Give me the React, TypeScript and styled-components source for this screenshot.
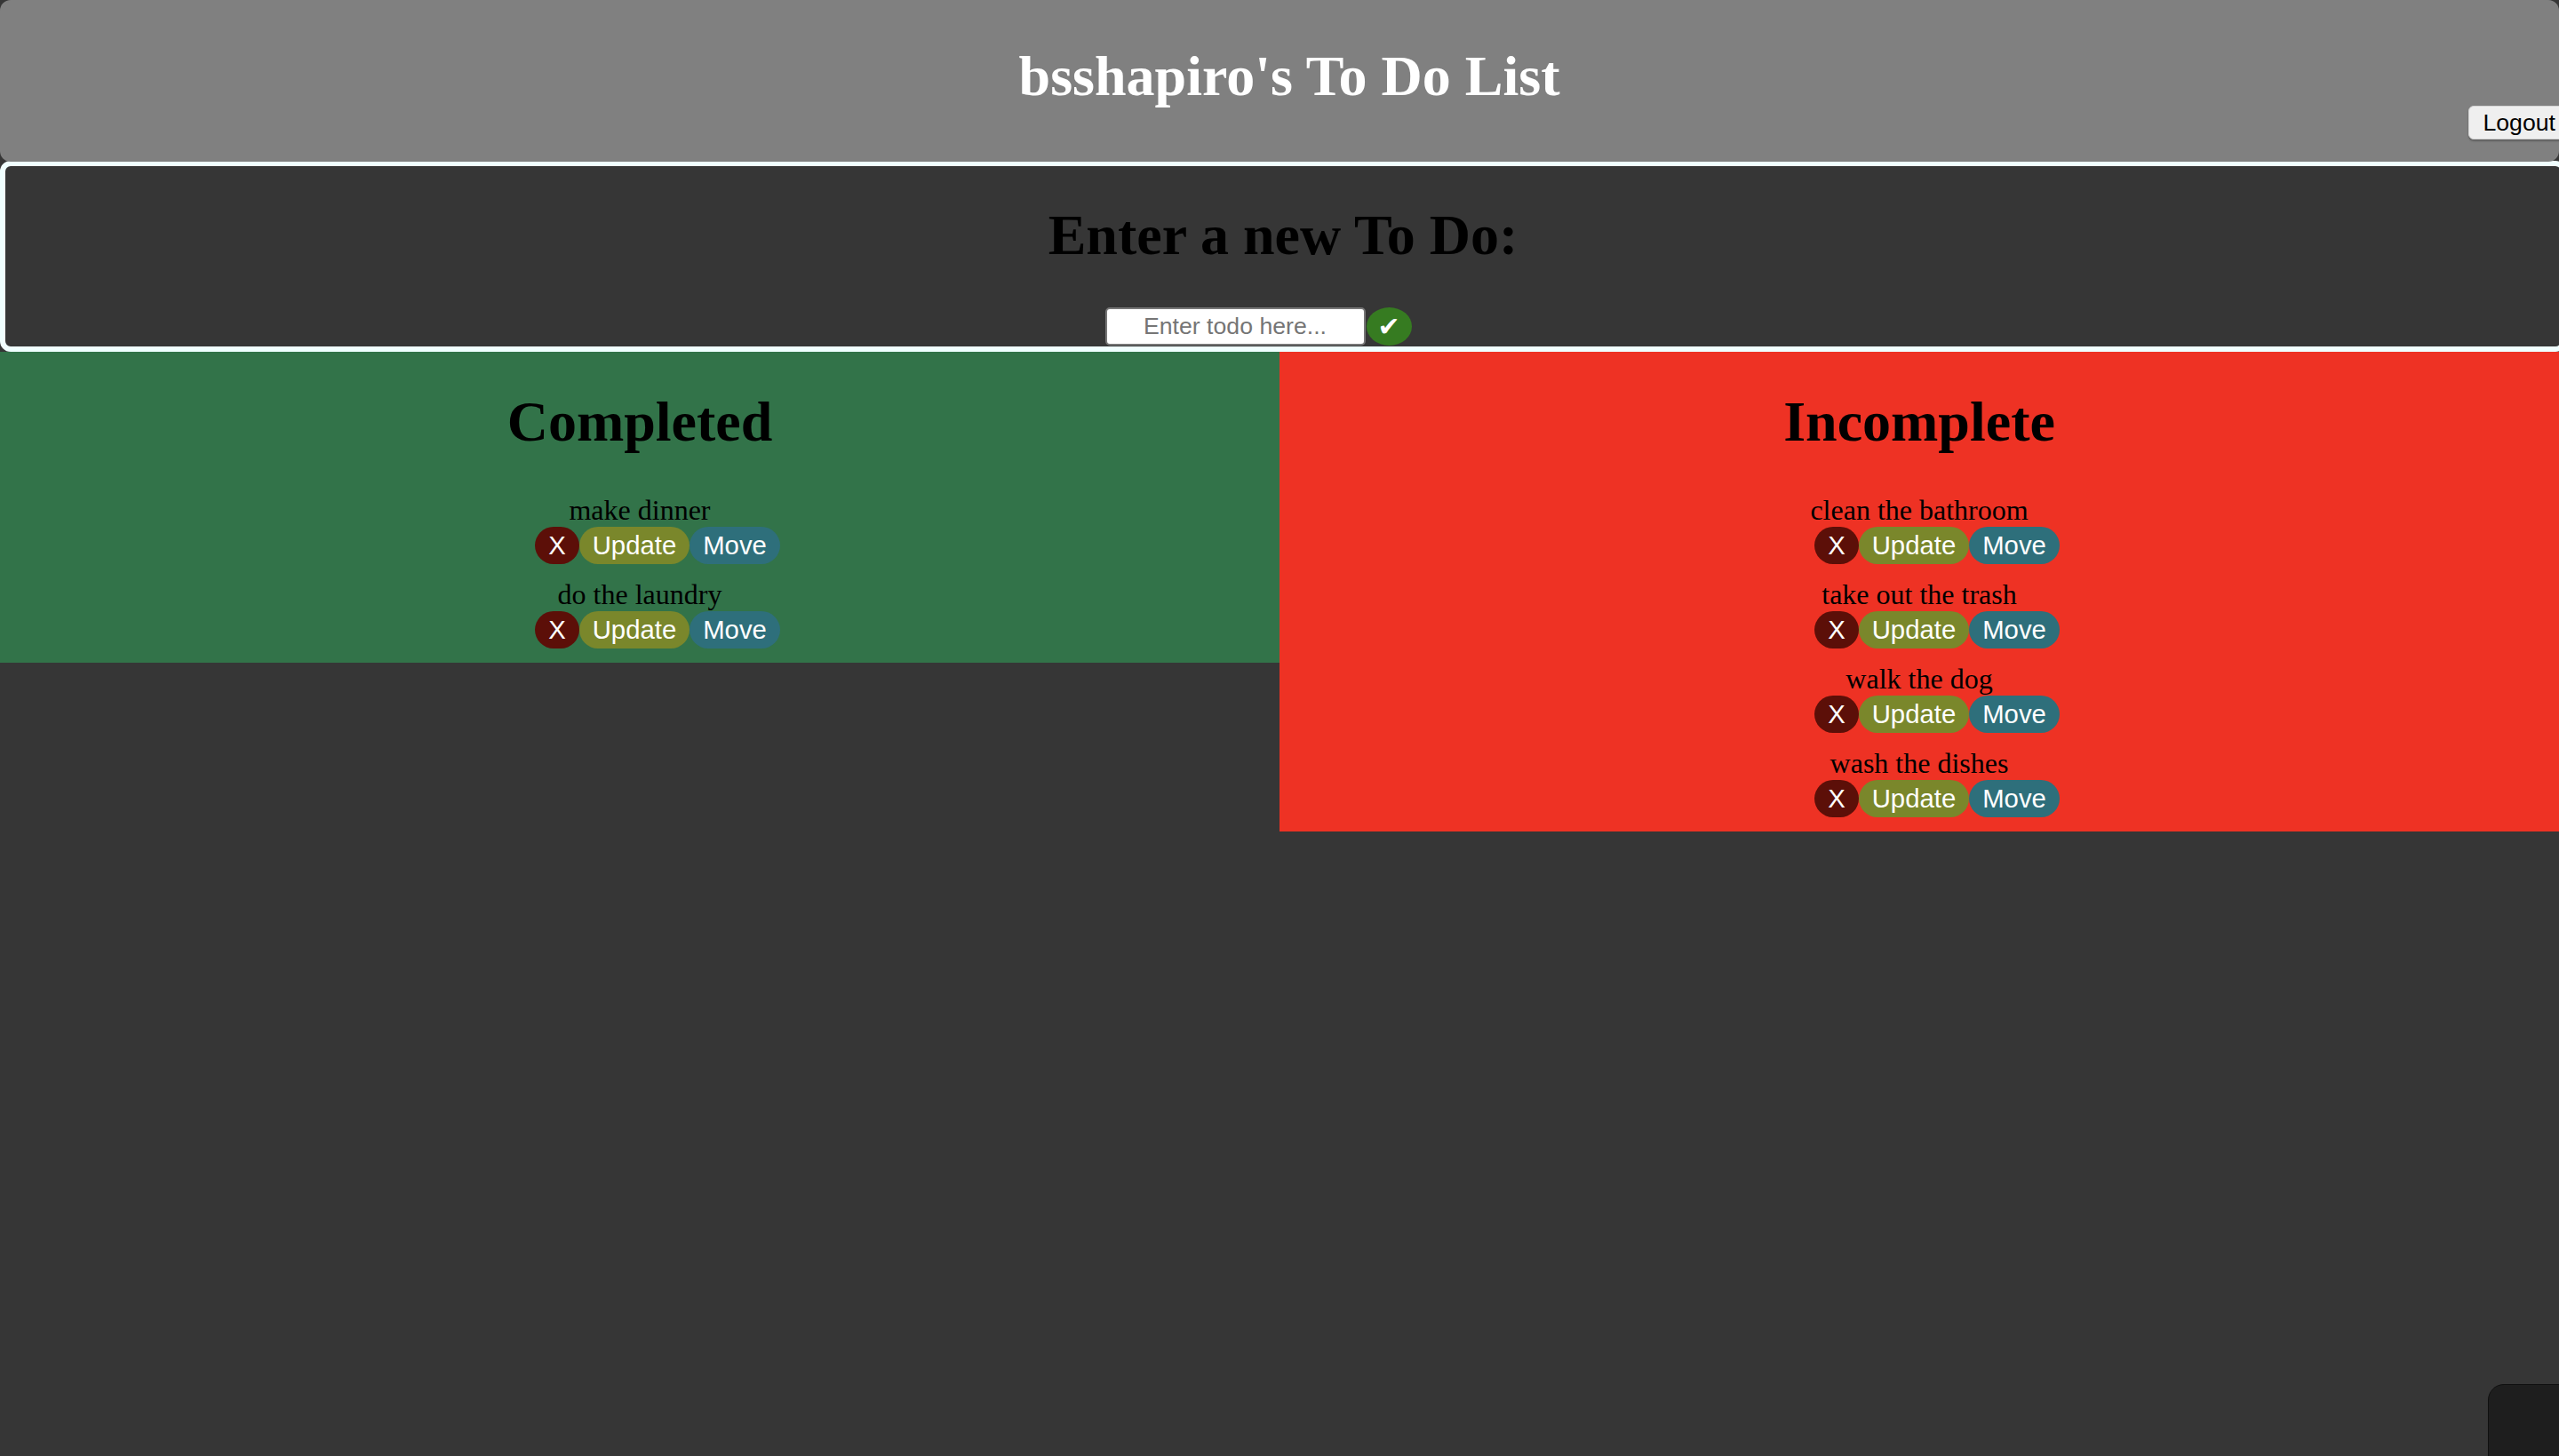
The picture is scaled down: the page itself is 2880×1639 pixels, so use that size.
import React, { useState } from 'react';
import styled, { createGlobalStyle } from 'styled-components';

const GlobalStyle = createGlobalStyle`
  html, body {
    margin: 0;
    padding: 0;
    background: #363636;
    overflow-x: hidden;
  }
  body {
    font-family: "Liberation Serif", "Times New Roman", serif;
  }
`;

const Page = styled.div`
  min-height: 1639px;
  background: #363636;
`;

const Header = styled.header`
  position: relative;
  box-sizing: border-box;
  height: 182px;
  padding-top: 49px;
  background: #808080;
  border-radius: 12px;
`;

const Title = styled.h1`
  margin: 0;
  padding-left: 22px;
  text-align: center;
  font-size: 64px;
  font-weight: bold;
  line-height: normal;
  color: #ffffff;
`;

const LogoutButton = styled.button`
  position: absolute;
  top: 119px;
  right: -12px;
  height: 38px;
  padding: 0 15px;
  border: 1px solid #d4d4d4;
  border-radius: 6px;
  background: #efefef;
  box-shadow: 0 2px 2px rgba(0, 0, 0, 0.25);
  color: #000;
  font-family: "Liberation Sans", Arial, sans-serif;
  font-size: 26.67px;
`;

const NewTodoBox = styled.section`
  box-sizing: border-box;
  width: calc(100% + 8px);
  margin-top: -1px;
  padding-bottom: 1px;
  border: 6px solid #f0ffff;
  border-radius: 12px;
  background: #363636;
  text-align: center;
`;

const SectionTitle = styled.h1`
  margin: 41px 0 44px;
  font-size: 64px;
  font-weight: bold;
  line-height: normal;
  color: #000;
`;

const InputRow = styled.div`
  display: flex;
  justify-content: center;
  padding-right: 56px;
`;

const TodoInput = styled.input`
  box-sizing: border-box;
  width: 293px;
  height: 43px;
  border: 2px solid #767676;
  border-radius: 5px;
  background: #fff;
  text-align: center;
  font-family: "Liberation Sans", Arial, sans-serif;
  font-size: 26.67px;
  outline: none;

  &::placeholder {
    color: #757575;
  }
`;

const SubmitButton = styled.button`
  display: flex;
  align-items: center;
  justify-content: center;
  width: 51px;
  height: 43px;
  margin-left: 1px;
  padding: 0;
  border: none;
  border-radius: 50%;
  background: #367b21;
  color: #fff;
  font-family: "DejaVu Sans", sans-serif;
  font-size: 30px;
  line-height: 1;
`;

const Columns = styled.div`
  display: grid;
  grid-template-columns: 1fr 1fr;
  align-items: start;
`;

const Column = styled.section<{ $bg: string }>`
  display: flow-root;
  background: ${p => p.$bg};
  text-align: center;
`;

const ColumnTitle = styled.h2`
  margin: 42px 0 44px;
  font-size: 64px;
  font-weight: bold;
  line-height: normal;
  color: #000;
`;

const Item = styled.div`
  margin-bottom: 16px;
`;

const ItemText = styled.div`
  font-size: 32px;
  line-height: normal;
  color: #000;
`;

const ButtonRow = styled.div`
  display: flex;
  justify-content: center;
  padding-left: 40px;
`;

const PillButton = styled.button<{ $bg: string }>`
  height: 42px;
  padding: 0 15px;
  border: none;
  border-radius: 21px;
  background: ${p => p.$bg};
  color: #fff;
  font-family: "Liberation Sans", Arial, sans-serif;
  font-size: 29.3px;
  line-height: 42px;
  cursor: pointer;
`;

const CornerWidget = styled.div`
  position: fixed;
  left: 2800px;
  top: 1558px;
  width: 200px;
  height: 200px;
  border: 1px solid #101010;
  border-radius: 18px;
  background: #1e1e1e;
`;

interface Todo {
  id: number;
  text: string;
  done: boolean;
}

const initialTodos: Todo[] = [
  { id: 1, text: 'make dinner', done: true },
  { id: 2, text: 'do the laundry', done: true },
  { id: 3, text: 'clean the bathroom', done: false },
  { id: 4, text: 'take out the trash', done: false },
  { id: 5, text: 'walk the dog', done: false },
  { id: 6, text: 'wash the dishes', done: false },
];

const TodoItem: React.FC<{ todo: Todo; onRemove: () => void; onMove: () => void }> = ({
  todo,
  onRemove,
  onMove,
}) => (
  <Item>
    <ItemText>{todo.text}</ItemText>
    <ButtonRow>
      <PillButton $bg="#5c0f08" onClick={onRemove}>X</PillButton>
      <PillButton $bg="#7a872b">Update</PillButton>
      <PillButton $bg="#2e6f7b" onClick={onMove}>Move</PillButton>
    </ButtonRow>
  </Item>
);

const App: React.FC = () => {
  const [todos, setTodos] = useState<Todo[]>(initialTodos);
  const [draft, setDraft] = useState('');

  const handleAdd = () => {
    if (!draft.trim()) return;
    setTodos([...todos, { id: Date.now(), text: draft.trim(), done: false }]);
    setDraft('');
  };

  const handleRemove = (id: number) => setTodos(todos.filter(t => t.id !== id));
  const handleMove = (id: number) =>
    setTodos(todos.map(t => (t.id === id ? { ...t, done: !t.done } : t)));

  const renderList = (done: boolean) =>
    todos
      .filter(t => t.done === done)
      .map(t => (
        <TodoItem
          key={t.id}
          todo={t}
          onRemove={() => handleRemove(t.id)}
          onMove={() => handleMove(t.id)}
        />
      ));

  return (
    <>
      <GlobalStyle />
      <Page>
        <Header>
          <Title>bsshapiro's To Do List</Title>
          <LogoutButton>Logout</LogoutButton>
        </Header>

        <NewTodoBox>
          <SectionTitle>Enter a new To Do:</SectionTitle>
          <InputRow>
            <TodoInput
              value={draft}
              onChange={(e) => setDraft(e.target.value)}
              placeholder="Enter todo here..."
            />
            <SubmitButton onClick={handleAdd}>✔</SubmitButton>
          </InputRow>
        </NewTodoBox>

        <Columns>
          <Column $bg="#327349">
            <ColumnTitle>Completed</ColumnTitle>
            {renderList(true)}
          </Column>
          <Column $bg="#ee3224">
            <ColumnTitle>Incomplete</ColumnTitle>
            {renderList(false)}
          </Column>
        </Columns>
      </Page>
      <CornerWidget />
    </>
  );
};

export default App;
